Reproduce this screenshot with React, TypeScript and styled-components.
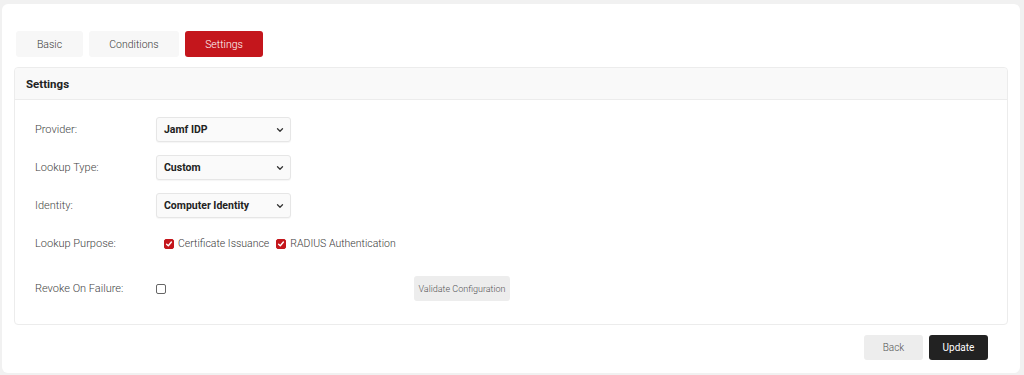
import React from 'react';
import styled, { createGlobalStyle } from 'styled-components';

const GlobalStyle = createGlobalStyle`
  html, body {
    margin: 0;
    padding: 0;
    background: #f1f1f1;
    font-family: Roboto, "Liberation Sans", Arial, sans-serif;
  }
  * {
    box-sizing: border-box;
  }
`;

const Page = styled.div`
  padding: 4px 4px 3px 2px;
`;

const Card = styled.div`
  background: #ffffff;
  border-radius: 6px;
  padding: 27px 12px 13px 12px;
`;

const Tabs = styled.div`
  display: flex;
  gap: 6px;
  margin-left: 2px;
  margin-bottom: 10px;
`;

const Tab = styled.button<{ $active?: boolean; $w: number }>`
  width: ${p => p.$w}px;
  height: 26px;
  border: none;
  border-radius: 3px;
  background: ${p => (p.$active ? '#c4161c' : '#f7f7f7')};
  color: ${p => (p.$active ? '#ffffff' : '#3a3a3a')};
  font-family: inherit;
  font-size: 10.5px;
  font-weight: 300;
  cursor: pointer;
  padding: 0;
`;

const Panel = styled.div`
  border: 1px solid #ececec;
  border-radius: 4px;
`;

const PanelHeader = styled.div`
  height: 32px;
  background: #f9f9f9;
  border-bottom: 1px solid #ececec;
  border-radius: 4px 4px 0 0;
  display: flex;
  align-items: center;
  padding-left: 11px;
  font-size: 11.5px;
  font-weight: 700;
  color: #222;
`;

const PanelBody = styled.div`
  padding: 17px 20px 23px 20px;
  display: flex;
  flex-direction: column;
  gap: 13px;
`;

const Row = styled.div<{ $top?: number }>`
  display: flex;
  align-items: center;
  height: 25px;
  margin-top: ${p => p.$top || 0}px;
`;

const Label = styled.div`
  width: 121px;
  font-size: 11px;
  font-weight: 300;
  color: #444;
`;

const SelectBox = styled.div`
  width: 135px;
  height: 25px;
  background: #fafafa;
  border: 1px solid #e6e6e6;
  border-radius: 3px;
  box-shadow: 0 1px 1px rgba(0, 0, 0, 0.04);
  display: flex;
  align-items: center;
  justify-content: space-between;
  padding: 0 6px 0 7px;
  font-size: 10.5px;
  font-weight: 700;
  color: #222;
`;

const Chevron = () => (
  <svg width="8" height="6" viewBox="0 0 8 6">
    <path d="M1.5 1.8 L4 4.2 L6.5 1.8" fill="none" stroke="#333" strokeWidth="1.3" strokeLinecap="round" strokeLinejoin="round" />
  </svg>
);

const Checks = styled.div`
  display: flex;
  align-items: center;
  gap: 7px;
  padding-left: 8px;
`;

const CheckItem = styled.label`
  display: flex;
  align-items: center;
  gap: 4px;
  font-size: 10.5px;
  font-weight: 300;
  color: #3a3a3a;
`;

const Box = styled.span<{ $checked?: boolean }>`
  width: 10px;
  height: 10px;
  border-radius: 2px;
  display: inline-flex;
  align-items: center;
  justify-content: center;
  background: ${p => (p.$checked ? '#c4161c' : '#ffffff')};
  border: 1px solid ${p => (p.$checked ? '#c4161c' : '#666')};
`;

const Tick = () => (
  <svg width="8" height="8" viewBox="0 0 8 8">
    <path d="M1.6 4.2 L3.3 5.8 L6.4 2" fill="none" stroke="#fff" strokeWidth="1.4" strokeLinecap="round" strokeLinejoin="round" />
  </svg>
);

const CheckCell = styled.div`
  width: 258px;
  display: flex;
  align-items: center;
`;

const GreyButton = styled.button<{ $w: number }>`
  width: ${p => p.$w}px;
  height: 25px;
  border: none;
  border-radius: 3px;
  background: #ededed;
  color: #555;
  font-family: inherit;
  font-size: ${p => (p.$w > 80 ? 9 : 10)}px;
  font-weight: 300;
  padding: 0;
  cursor: pointer;
`;

const DarkButton = styled(GreyButton)`
  background: #222222;
  color: #ffffff;
  font-weight: 400;
`;

const Footer = styled.div`
  display: flex;
  justify-content: flex-end;
  gap: 6px;
  margin-top: 10px;
  padding-right: 20px;
`;

export default function App() {
  return (
    <>
      <GlobalStyle />
      <Page>
        <Card>
          <Tabs>
            <Tab $w={67}>Basic</Tab>
            <Tab $w={90}>Conditions</Tab>
            <Tab $w={78} $active>Settings</Tab>
          </Tabs>
          <Panel>
            <PanelHeader>Settings</PanelHeader>
            <PanelBody>
              <Row>
                <Label>Provider:</Label>
                <SelectBox>Jamf IDP<Chevron /></SelectBox>
              </Row>
              <Row>
                <Label>Lookup Type:</Label>
                <SelectBox>Custom<Chevron /></SelectBox>
              </Row>
              <Row>
                <Label>Identity:</Label>
                <SelectBox>Computer Identity<Chevron /></SelectBox>
              </Row>
              <Row>
                <Label>Lookup Purpose:</Label>
                <Checks>
                  <CheckItem><Box $checked><Tick /></Box>Certificate Issuance</CheckItem>
                  <CheckItem><Box $checked><Tick /></Box>RADIUS Authentication</CheckItem>
                </Checks>
              </Row>
              <Row $top={7}>
                <Label>Revoke On Failure:</Label>
                <CheckCell><Box /></CheckCell>
                <GreyButton $w={96}>Validate Configuration</GreyButton>
              </Row>
            </PanelBody>
          </Panel>
          <Footer>
            <GreyButton $w={59}>Back</GreyButton>
            <DarkButton $w={59}>Update</DarkButton>
          </Footer>
        </Card>
      </Page>
    </>
  );
}
